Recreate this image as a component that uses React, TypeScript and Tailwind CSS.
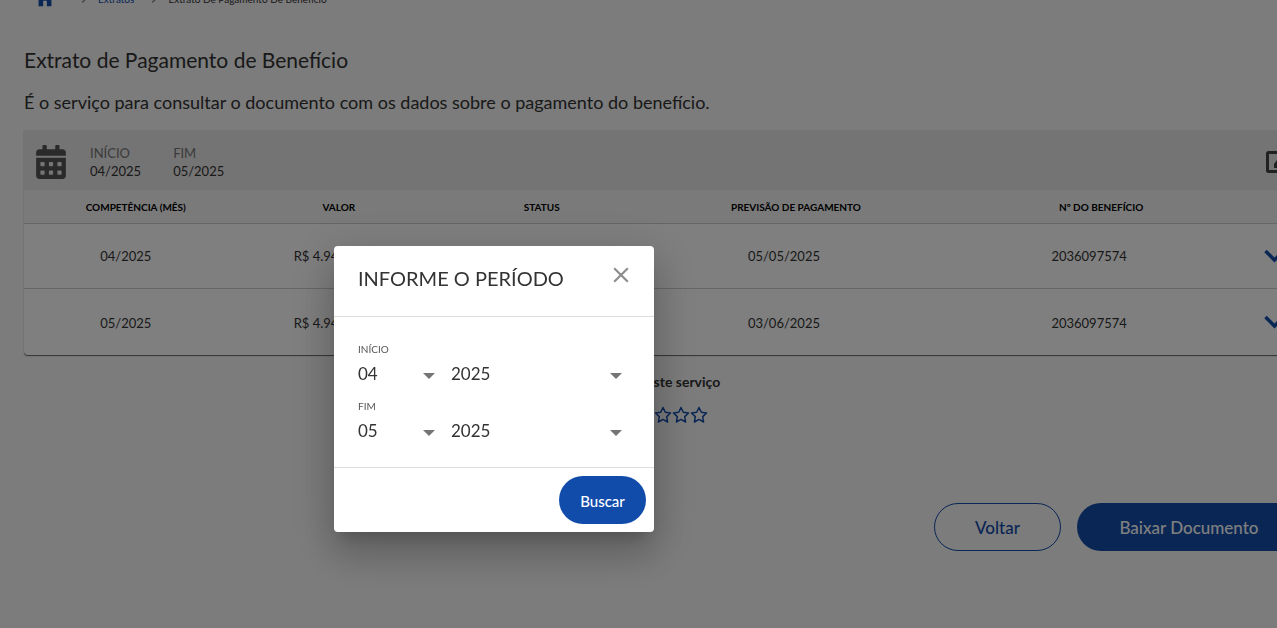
import { useState } from 'react';
import { FaCalendarAlt } from 'react-icons/fa';
import { MdChevronRight, MdClose, MdHome } from 'react-icons/md';

interface Payment {
  month: string;
  value: string;
  status: string;
  expected: string;
  benefit: string;
}

const payments: Payment[] = [
  { month: '04/2025', value: 'R$ 4.940,00', status: 'Pago', expected: '05/05/2025', benefit: '2036097574' },
  { month: '05/2025', value: 'R$ 4.940,00', status: 'Pago', expected: '03/06/2025', benefit: '2036097574' },
];

const months = ['01', '02', '03', '04', '05', '06', '07', '08', '09', '10', '11', '12'];
const years = ['2023', '2024', '2025'];

interface PeriodSelectProps {
  label: string;
  options: string[];
  value: string;
  onChange: (value: string) => void;
}

const PeriodSelect = ({ label, options, value, onChange }: PeriodSelectProps) => (
  <div className="grid items-center">
    <select
      aria-label={label}
      value={value}
      onChange={(e) => onChange(e.target.value)}
      className="col-start-1 row-start-1 w-full appearance-none bg-transparent text-[17px] leading-6 text-[#333333] outline-none"
    >
      {options.map((option) => (
        <option key={option}>{option}</option>
      ))}
    </select>
    <svg viewBox="0 0 12 6" className="pointer-events-none col-start-1 row-start-1 mt-1 mr-[2px] h-[6px] w-3 justify-self-end fill-[#757575]">
      <path d="M0 0h12L6 6z" />
    </svg>
  </div>
);

interface PeriodFieldProps {
  label: string;
  month: string;
  year: string;
  onMonth: (value: string) => void;
  onYear: (value: string) => void;
}

const PeriodField = ({ label, month, year, onMonth, onYear }: PeriodFieldProps) => (
  <fieldset>
    <legend className="text-[10px] leading-4 text-[#555555]">{label}</legend>
    <div className="grid grid-cols-[79px_1fr] gap-[14px] pt-[5px] pr-[6px]">
      <PeriodSelect label={`${label} mês`} options={months} value={month} onChange={onMonth} />
      <PeriodSelect label={`${label} ano`} options={years} value={year} onChange={onYear} />
    </div>
  </fieldset>
);

const PeriodDialog = () => {
  const [start, setStart] = useState({ month: '04', year: '2025' });
  const [end, setEnd] = useState({ month: '05', year: '2025' });

  return (
    <div className="fixed inset-0 z-50 flex items-start bg-black/50 pt-[246px] pl-[334px]">
      <div
        role="dialog"
        aria-modal="true"
        aria-labelledby="period-title"
        className="w-80 rounded bg-white shadow-[0_11px_15px_-7px_rgba(0,0,0,0.2),0_24px_38px_3px_rgba(0,0,0,0.14),0_9px_46px_8px_rgba(0,0,0,0.12)]"
      >
        <header className="flex items-start justify-between border-b border-[#dddddd] px-6 pt-4 pb-[22px]">
          <h2 id="period-title" className="text-[20px] leading-8 text-[#333333]">INFORME O PERÍODO</h2>
          <button type="button" aria-label="Fechar" className="-mr-1 text-[#8c8c8c]">
            <MdClose className="size-[26px]" />
          </button>
        </header>
        <div className="flex flex-col gap-3 px-6 pt-6 pb-6">
          <PeriodField
            label="INÍCIO"
            month={start.month}
            year={start.year}
            onMonth={(month) => setStart({ ...start, month })}
            onYear={(year) => setStart({ ...start, year })}
          />
          <PeriodField
            label="FIM"
            month={end.month}
            year={end.year}
            onMonth={(month) => setEnd({ ...end, month })}
            onYear={(year) => setEnd({ ...end, year })}
          />
        </div>
        <footer className="flex justify-end border-t border-[#dddddd] p-2">
          <button type="button" className="h-12 w-[87px] rounded-full bg-[#124cab] pt-[2px] text-[15px] font-medium text-white">
            Buscar
          </button>
        </footer>
      </div>
    </div>
  );
};

export default function App() {
  return (
    <div className="min-h-screen overflow-hidden bg-[#f8f8f8] font-['Lato',sans-serif] text-[#333333]">
      {/* the page is a little wider than the window */}
      <div className="w-[calc(100%+48px)] px-6">
        <nav aria-label="Navegação" className="-mt-3 flex h-[22px] items-center pl-[10px] text-[10px]">
          <a href="#" aria-label="Início" className="mr-[20px] text-[#124cab]">
            <MdHome className="size-[22px]" />
          </a>
          <MdChevronRight className="mr-[6px] size-4 text-[#888888]" />
          <a href="#" className="mr-[12px] text-[#124cab]">Extratos</a>
          <MdChevronRight className="mr-[6px] size-4 text-[#888888]" />
          <span>Extrato De Pagamento De Benefício</span>
        </nav>

        <h1 className="mt-9 text-[21px] leading-7">Extrato de Pagamento de Benefício</h1>
        <p className="mt-4 text-[18px] leading-6">É o serviço para consultar o documento com os dados sobre o pagamento do benefício.</p>

        <section className="mt-4 overflow-hidden rounded-b bg-white shadow-[0_1px_1px_rgba(0,0,0,0.6)]">
          <div className="flex h-[60px] items-center bg-[#e8e8e8] px-3 pt-[3px]">
            <FaCalendarAlt className="h-[34px] w-[30px] text-[#555555]" />
            <dl className="ml-6 flex flex-1 gap-[32px] text-[13px] leading-[18px]">
              <div>
                <dt className="text-[#777777]">INÍCIO</dt>
                <dd>04/2025</dd>
              </div>
              <div>
                <dt className="text-[#777777]">FIM</dt>
                <dd>05/2025</dd>
              </div>
            </dl>
            <button type="button" aria-label="Alterar período" className="mr-[1px] text-[#444444]">
              <svg viewBox="0 0 22 22" className="size-[22px]" fill="none" stroke="currentColor" strokeWidth="3">
                <rect x="1.5" y="1.5" width="19" height="19" rx="1" />
                <path d="M8 17v-4l3-4h3v8z" fill="currentColor" stroke="none" />
              </svg>
            </button>
          </div>
          <table className="w-full table-fixed text-center text-[13px]">
            <thead className="bg-[#f5f5f5] text-[10px]">
              <tr className="h-[33px] border-b border-[#cccccc] text-black">
                <th className="w-[17.5%] pt-[2px] font-bold">COMPETÊNCIA (MÊS)</th>
                <th className="w-[14.3%] pt-[2px] font-bold">VALOR</th>
                <th className="w-[17.5%] pt-[2px] font-bold">STATUS</th>
                <th className="w-[22.3%] pt-[2px] font-bold">PREVISÃO DE PAGAMENTO</th>
                <th className="w-[25.5%] pt-[2px] font-bold">Nº DO BENEFÍCIO</th>
                <th aria-label="Detalhes" />
              </tr>
            </thead>
            <tbody>
              {payments.map((payment) => (
                <tr key={payment.month} className="h-[65px] border-b border-[#cccccc] last:h-[67px] last:border-b-0">
                  <td className="pt-[3px] pr-5">{payment.month}</td>
                  <td className="pt-[3px] pr-5">{payment.value}</td>
                  <td className="pt-[3px] pr-5">{payment.status}</td>
                  <td className="pt-[3px] pr-6">{payment.expected}</td>
                  <td className="pt-[3px] pr-6">{payment.benefit}</td>
                  <td>
                    <button type="button" aria-label="Ver detalhes" className="block text-[#124cab]">
                      <svg viewBox="0 0 21 14" className="h-[14px] w-[21px]" fill="none" stroke="currentColor" strokeWidth="3.5">
                        <path d="M1.5 2L10.500 11L19.500 2" />
                      </svg>
                    </button>
                  </td>
                </tr>
              ))}
            </tbody>
          </table>
        </section>

        <div className="mt-[15px] flex flex-col items-center gap-3">
          <p className="text-[14px] leading-6 font-bold">Avalie este serviço</p>
          <div className="flex text-[#124cab]">
            {[1, 2, 3, 4, 5].map((star) => (
              <button key={star} type="button" aria-label={`Nota ${star}`}>
                <svg viewBox="0 0 18 18" className="size-[18px]" fill="none" stroke="currentColor" strokeWidth="1.5" strokeLinejoin="round">
                  <path d="M9 1.500L11.300 6.300L16.500 7L12.700 10.600L13.600 16L9 13.400L4.400 16L5.300 10.600L1.500 7L6.700 6.300Z" />
                </svg>
              </button>
            ))}
          </div>
        </div>

        <div className="mt-[79px] flex justify-end gap-4 pb-16 text-[17px] font-medium">
          <button type="button" className="h-12 w-[127px] rounded-full border border-[#124cab] pt-[2px] text-[#124cab]">Voltar</button>
          <button type="button" className="h-12 w-56 rounded-full bg-[#124cab] pt-[2px] text-white">Baixar Documento</button>
        </div>
      </div>
      <PeriodDialog />
    </div>
  );
}
